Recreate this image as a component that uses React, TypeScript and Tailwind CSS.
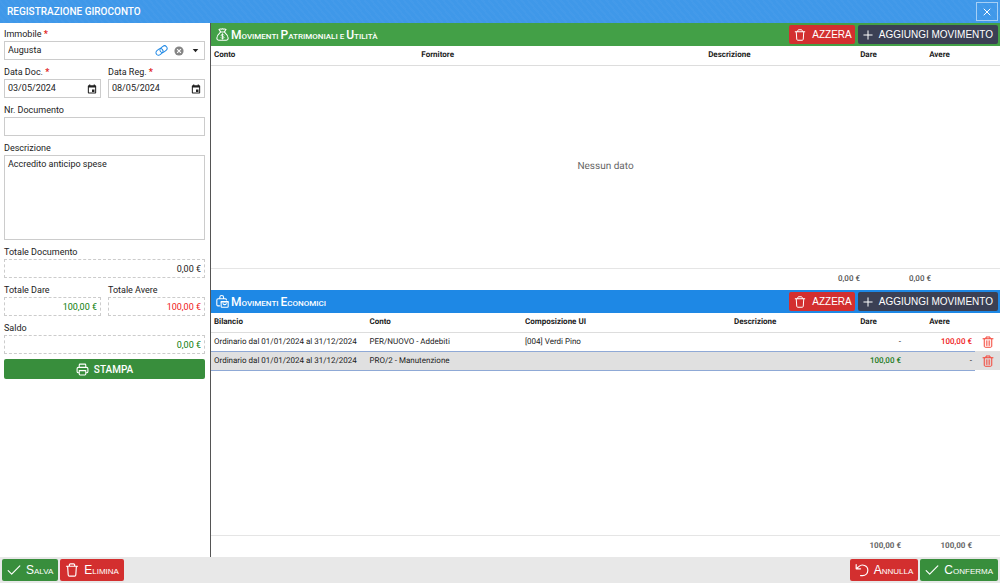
import { useState } from 'react';
import type { ReactNode } from 'react';

const movements = [
  {
    id: 1,
    budget: 'Ordinario dal 01/01/2024 al 31/12/2024',
    account: 'PER/NUOVO - Addebiti',
    unit: '[004] Verdi Pino',
    description: '',
    debit: '-',
    credit: '100,00 €',
  },
  {
    id: 2,
    budget: 'Ordinario dal 01/01/2024 al 31/12/2024',
    account: 'PRO/2 - Manutenzione',
    unit: '',
    description: '',
    debit: '100,00 €',
    credit: '-',
  },
];

type IconProps = { className?: string; children?: ReactNode };

function Icon({ className = 'size-3', children }: IconProps) {
  return (
    <svg
      viewBox="0 0 24 24"
      className={`shrink-0 ${className}`}
      fill="none"
      stroke="currentColor"
      strokeWidth="2"
      strokeLinecap="round"
      strokeLinejoin="round"
      aria-hidden="true"
    >
      {children}
    </svg>
  );
}

const TrashIcon = ({ className }: IconProps) => (
  <Icon className={className}>
    <path d="M2.5 5.5h19M7.500 5V3.200C7.500 2.200 8.300 1.500 9.300 1.500h5.400c1 0 1.800.7 1.800 1.700V5M4.500 6l1 14.600c.1 1.100.9 1.900 2 1.900h9c1.100 0 1.900-.8 2-1.900L19.500 6" />
  </Icon>
);

// same bin with ribs, used inside the rows
const RowTrashIcon = () => (
  <Icon className="size-3">
    <path d="M2 5.500h20M8 5V2h8v3M4.500 6v14.500c0 1 .8 2 2 2h11c1.200 0 2-1 2-2V6" />
    <path strokeWidth="1.500" d="M8.800 9.500v9.500M12 9.500v9.500M15.200 9.500v9.500" />
  </Icon>
);

const PlusIcon = () => (
  <Icon className="size-[10px]">
    <path strokeWidth="2.400" d="M12 2v20M2 12h20" />
  </Icon>
);

const CheckIcon = () => (
  <Icon className="size-[14px]">
    <path d="M2 13l6 6L22 5" />
  </Icon>
);

const UndoIcon = () => (
  <Icon className="size-[14px]">
    <path d="M2 2.500v7.500h7.500M2.500 9.500L7 5.800C12 1.200 22 4 22 12.500 22 18 18 21.500 13 21.500H9.500" />
  </Icon>
);

const PrinterIcon = () => (
  <Icon className="size-[13px]">
    <path d="M6 8V3.500C6 2.500 6.700 2 7.500 2h9c.8 0 1.500.5 1.500 1.500V8M6 18H4.500C3 18 2 17 2 15.500v-5C2 9 3 8 4.500 8h15C21 8 22 9 22 10.500v5c0 1.500-1 2.500-2.500 2.500H18M6 14h12v6.500c0 .8-.6 1.500-1.500 1.500h-9c-.9 0-1.500-.7-1.500-1.500z" />
  </Icon>
);

const MoneyBagIcon = () => (
  <Icon className="size-[13px]">
    <path d="M8.500 7L5.500 2.500C8 .8 9.500 3 12 1.500c2.500 1.500 4-.7 6.500 1L15.500 7M7.500 7.500h9M8 8C4.500 11 1.500 15 1.500 19c0 2.500 1.500 3.500 3.500 3.500h14c2 0 3.500-1 3.500-3.500 0-4-3-8-6.500-11" />
    <path strokeWidth="1.600" d="M14.500 13c-.5-.8-1.300-1.200-2.500-1.200-1.500 0-2.500.7-2.500 1.800 0 2.600 5.200 1.200 5.200 3.800 0 1.200-1.100 1.900-2.700 1.900-1.300 0-2.200-.5-2.700-1.400M12 10.500v10" />
  </Icon>
);

const BagsIcon = () => (
  <Icon className="size-[13px]">
    <path d="M7 6V4.500a3.500 3.500 0 0 1 7 0V6M6.500 20H3.500c-1.300 0-2-1-2-2V9.500C1.500 8 2.500 7 4 7h13c1.200 0 2 .8 2.300 2" />
    <path d="M9.500 12h13v9c0 1-.7 1.500-1.500 1.500H11c-1 0-1.500-.6-1.500-1.500zM13 16c1.500 2.400 4.500 2.400 6 0" />
    <path strokeWidth="1.500" d="M9.500 13.300h13" />
  </Icon>
);

const LinkIcon = () => (
  <Icon className="size-[13px]">
    <g transform="rotate(-38 12 12)" strokeWidth="1.800">
      <rect x="0.500" y="7" width="14" height="9.500" rx="4.700" />
      <rect x="9.500" y="7.500" width="14" height="9.500" rx="4.700" />
    </g>
  </Icon>
);

const ClearIcon = () => (
  <svg viewBox="0 0 24 24" className="size-[10px]" aria-hidden="true">
    <circle cx="12" cy="12" r="11" fill="#858585" />
    <path d="M7.500 7.500l9 9M16.500 7.500l-9 9" stroke="#fff" strokeWidth="2.600" />
  </svg>
);

const CalendarIcon = () => (
  <svg viewBox="0 0 24 24" className="size-[10px]" aria-hidden="true">
    <path
      fill="#222"
      fillRule="evenodd"
      d="M5 1h3v2h8V1h3v2h1c1.200 0 2 .9 2 2v16c0 1.200-.8 2-2 2H4c-1.200 0-2-.8-2-2V5c0-1.100.8-2 2-2h1zM4.500 8.500v12h15v-12zM12 13h6v6h-6z"
    />
  </svg>
);

function Label({ htmlFor, required, children }: { htmlFor: string; required?: boolean; children: ReactNode }) {
  return (
    <label htmlFor={htmlFor} className="block h-[14px] leading-[14px]">
      {children}
      {required && <span className="font-bold text-[#e02020]"> *</span>}
    </label>
  );
}

function DateField({ id, label, initial }: { id: string; label: string; initial: string }) {
  const [value, setValue] = useState(initial);

  return (
    <div className="min-w-0 flex-1">
      <Label htmlFor={id} required>{label}</Label>
      <div className="flex h-[19px] items-center border border-[#ccc] px-[3px]">
        <input
          id={id}
          value={value}
          onChange={(e) => setValue(e.target.value)}
          className="w-full min-w-0 flex-1 outline-none"
        />
        <button type="button" aria-label={`Apri calendario ${label}`}>
          <CalendarIcon />
        </button>
      </div>
    </div>
  );
}

function TotalField({ id, label, value, color }: { id: string; label: string; value: string; color: string }) {
  return (
    <div className="min-w-0">
      <Label htmlFor={id}>{label}</Label>
      <input
        id={id}
        readOnly
        value={value}
        className={`block h-[19px] w-full border border-dashed border-[#ccc] px-[3px] text-right outline-none ${color}`}
      />
    </div>
  );
}

function Sidebar() {
  const [number, setNumber] = useState('');
  const [description, setDescription] = useState('Accredito anticipo spese');

  return (
    <aside className="flex w-[211px] shrink-0 flex-col gap-[5px] overflow-hidden border-r border-[#555] pt-1 pr-[5px] pl-1">
      <div>
        <Label htmlFor="immobile" required>Immobile</Label>
        <div className="flex h-[19px] items-center gap-[6px] border border-[#ccc] px-[3px]">
          <select id="immobile" className="min-w-0 flex-1 appearance-none outline-none">
            <option>Augusta</option>
          </select>
          <button type="button" aria-label="Apri immobile" className="text-[#1e88e5]">
            <LinkIcon />
          </button>
          <button type="button" aria-label="Svuota immobile">
            <ClearIcon />
          </button>
          <svg viewBox="0 0 10 10" className="mx-[2px] size-[7px]" aria-hidden="true">
            <path d="M1 3h8L5 7.500z" fill="#222" />
          </svg>
        </div>
      </div>

      <div className="flex gap-[7px]">
        <DateField id="data-doc" label="Data Doc." initial="03/05/2024" />
        <DateField id="data-reg" label="Data Reg." initial="08/05/2024" />
      </div>

      <div>
        <Label htmlFor="numero">Nr. Documento</Label>
        <input
          id="numero"
          value={number}
          onChange={(e) => setNumber(e.target.value)}
          className="block h-[19px] w-full border border-[#ccc] px-[3px] outline-none"
        />
      </div>

      <div>
        <Label htmlFor="descrizione">Descrizione</Label>
        <textarea
          id="descrizione"
          value={description}
          onChange={(e) => setDescription(e.target.value)}
          className="block h-[85px] w-full resize-none border border-[#ccc] px-[3px] py-[2px] leading-[12px] outline-none"
        />
      </div>

      <TotalField id="tot-doc" label="Totale Documento" value="0,00 €" color="text-[#222]" />
      <div className="grid grid-cols-2 gap-[7px]">
        <TotalField id="tot-dare" label="Totale Dare" value="100,00 €" color="text-[#0a7d0a]" />
        <TotalField id="tot-avere" label="Totale Avere" value="100,00 €" color="text-[#f01818]" />
      </div>
      <TotalField id="saldo" label="Saldo" value="0,00 €" color="text-[#0a7d0a]" />

      <button
        type="button"
        className="flex h-5 items-center justify-center gap-[5px] rounded-[2px] bg-[#388e3c] text-[10px] font-medium text-white"
      >
        <PrinterIcon />
        STAMPA
      </button>
    </aside>
  );
}

// capitals at full size, everything else as small capitals
function Caps({ text }: { text: string }) {
  return (
    <span className="flex items-baseline gap-[2px] text-[8px] uppercase">
      {text.split(' ').map((word) => (
        <span
          key={word}
          className={word.length > 1 ? 'block first-letter:text-[12px]' : 'block'}
        >
          {word}
        </span>
      ))}
    </span>
  );
}

function PanelHeader({ title, icon, color }: { title: string; icon: ReactNode; color: string }) {
  return (
    <header className={`flex h-[23px] shrink-0 items-center gap-[3px] pr-[2px] pl-[5px] text-white ${color}`}>
      <h2 className="mr-auto flex items-center gap-[2px] font-medium">
        {icon}
        <Caps text={title} />
      </h2>
      <button
        type="button"
        className="flex h-[19px] items-center gap-[6px] rounded-[2px] bg-[#d32f2f] pr-[3px] pl-[5px] font-['Liberation_Sans',sans-serif] text-[10px]"
      >
        <TrashIcon />
        AZZERA
      </button>
      <button
        type="button"
        className="flex h-[19px] items-center gap-[6px] rounded-[2px] bg-[#3b4054] px-[5px] font-['Liberation_Sans',sans-serif] text-[10px]"
      >
        <PlusIcon />
        AGGIUNGI MOVIMENTO
      </button>
    </header>
  );
}

function AmountCols() {
  return (
    <>
      <col className="w-[71px]" />
      <col className="w-[71px]" />
      <col className="w-[25px]" />
    </>
  );
}

function PatrimonialPanel() {
  return (
    <section className="flex min-h-0 flex-1 flex-col">
      <PanelHeader title="Movimenti Patrimoniali e Utilità" icon={<MoneyBagIcon />} color="bg-[#43a047]" />
      <div className="min-h-0 flex-1">
        <table className="h-full w-full table-fixed border-collapse text-[8px] [text-rendering:geometricPrecision]">
          <colgroup>
            <col />
            <col />
            <col />
            <AmountCols />
          </colgroup>
          <thead>
            <tr className="h-[19px] border-b border-[#ddd]">
              <th className="px-[3px] text-left">Conto</th>
              <th className="px-[3px] text-left">Fornitore</th>
              <th>Descrizione</th>
              <th>Dare</th>
              <th>Avere</th>
              <td />
            </tr>
          </thead>
          <tbody>
            <tr>
              <td colSpan={6} className="text-center text-[10px] text-[#666]">Nessun dato</td>
            </tr>
          </tbody>
          <tfoot>
            <tr className="h-[22px] border-t border-[#e5e5e5] font-medium text-[#555]">
              <td colSpan={3} />
              <td className="pl-[5px] text-left">0,00 €</td>
              <td className="pl-[5px] text-left">0,00 €</td>
              <td />
            </tr>
          </tfoot>
        </table>
      </div>
    </section>
  );
}

function EconomicPanel() {
  const [rows, setRows] = useState(movements);

  return (
    <section className="flex min-h-0 flex-1 flex-col">
      <PanelHeader title="Movimenti Economici" icon={<BagsIcon />} color="bg-[#1e88e5]" />
      <div className="min-h-0 flex-1">
        <table className="h-full w-full table-fixed border-collapse text-[8px] [text-rendering:geometricPrecision]">
          <colgroup>
            <col />
            <col />
            <col />
            <col />
            <AmountCols />
          </colgroup>
          <thead>
            <tr className="h-[19px] border-b border-[#ddd]">
              <th className="px-[3px] text-left">Bilancio</th>
              <th className="px-[3px] text-left">Conto</th>
              <th className="px-[3px] text-left">Composizione UI</th>
              <th>Descrizione</th>
              <th>Dare</th>
              <th>Avere</th>
              <td />
            </tr>
          </thead>
          <tbody>
            {rows.map((row) => (
              <tr key={row.id} className="h-[19px] whitespace-nowrap even:bg-[#e0e0e0]">
                <td className="border-b border-[#8fa9d6] px-[3px]">{row.budget}</td>
                <td className="border-b border-[#8fa9d6] px-[3px]">{row.account}</td>
                <td className="border-b border-[#8fa9d6] px-[3px]">{row.unit}</td>
                <td className="border-b border-[#8fa9d6] px-[3px]">{row.description}</td>
                <td className={`border-b border-[#8fa9d6] px-[3px] text-right ${row.debit === '-' ? '' : 'font-medium text-[#1b7a1b]'}`}>
                  {row.debit}
                </td>
                <td className={`border-b border-[#8fa9d6] px-[3px] text-right ${row.credit === '-' ? '' : 'font-medium text-[#f01818]'}`}>
                  {row.credit}
                </td>
                <td>
                  <button
                    type="button"
                    aria-label="Elimina riga"
                    className="mx-auto block text-[#f44336]"
                    onClick={() => setRows(rows.filter((r) => r.id !== row.id))}
                  >
                    <RowTrashIcon />
                  </button>
                </td>
              </tr>
            ))}
            {/* takes the free height so the totals stay at the bottom */}
            <tr>
              <td colSpan={7} />
            </tr>
          </tbody>
          <tfoot>
            <tr className="h-[22px] border-t border-[#e5e5e5] text-right font-bold text-[#666]">
              <td colSpan={4} />
              <td className="px-[3px]">100,00 €</td>
              <td className="px-[3px]">100,00 €</td>
              <td />
            </tr>
          </tfoot>
        </table>
      </div>
    </section>
  );
}

function FooterButton({ color, icon, children }: { color: string; icon: ReactNode; children: ReactNode }) {
  return (
    <button
      type="button"
      className={`flex h-[22px] items-center gap-[5px] rounded-[2px] px-[5px] text-[12px] text-white [font-variant:small-caps] ${color}`}
    >
      {icon}
      {children}
    </button>
  );
}

export default function App() {
  return (
    <div className="flex h-screen flex-col bg-white font-[Roboto,sans-serif] text-[9px] text-[#222]">
      <header className="flex h-[23px] shrink-0 items-center justify-between bg-[#3f98e9] bg-[repeating-linear-gradient(50deg,transparent_0_3px,#ffffff06_3px_5px)] pr-[2px] pl-[7px] text-white">
        <h1 className="text-[10px] font-medium">REGISTRAZIONE GIROCONTO</h1>
        <button
          type="button"
          aria-label="Chiudi"
          className="flex h-[19px] w-[22px] items-center justify-center border border-[#a5cff5]"
        >
          <Icon className="size-[8px]">
            <path strokeWidth="3" d="M3 3l18 18M21 3L3 21" />
          </Icon>
        </button>
      </header>

      <main className="flex min-h-0 flex-1">
        <Sidebar />
        <div className="flex min-w-0 flex-1 flex-col">
          <PatrimonialPanel />
          <EconomicPanel />
        </div>
      </main>

      <footer className="flex h-[26px] shrink-0 items-center gap-[2px] bg-[#e8e8e8] px-[2px] font-['Liberation_Sans',sans-serif]">
        <FooterButton color="bg-[#388e3c]" icon={<CheckIcon />}>Salva</FooterButton>
        <FooterButton color="bg-[#d32f2f]" icon={<TrashIcon className="size-[14px]" />}>Elimina</FooterButton>
        <div className="flex-1" />
        <FooterButton color="bg-[#d32f2f]" icon={<UndoIcon />}>Annulla</FooterButton>
        <FooterButton color="bg-[#388e3c]" icon={<CheckIcon />}>Conferma</FooterButton>
      </footer>
    </div>
  );
}
